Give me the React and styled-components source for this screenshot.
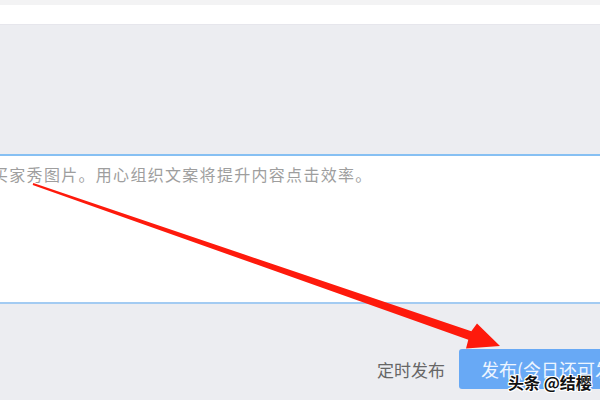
import styled, { createGlobalStyle } from "styled-components"

const GlobalStyle = createGlobalStyle`
  html, body {
    margin: 0;
    padding: 0;
    width: 600px;
    height: 400px;
    overflow: hidden;
    font-family: "Noto Sans CJK SC", "Noto Sans", sans-serif;
  }
`

export default function App() {
  return (
    <Page>
      <GlobalStyle />
      <TopStrip />
      <WhiteBar />
      <Panel>
        <Blank />
        <Editor>
          <Placeholder>买家秀图片。用心组织文案将提升内容点击效率。</Placeholder>
        </Editor>
        <Footer>
          <Schedule>定时发布</Schedule>
          <PublishButton>发布(今日还可发3次)</PublishButton>
        </Footer>
      </Panel>

      <Arrow width="600" height="400" viewBox="0 0 600 400">
        <polygon
          fill="#fe1a0c"
          points="33.3,183.1 471.3,331.2 477,323.5 500,346 466,348.5 468.3,339.8 32.7,184.9"
        />
      </Arrow>
      <Watermark>头条 @结樱</Watermark>
    </Page>
  )
}

const Page = styled.div`
  position: relative;
  width: 600px;
  height: 400px;
  display: flex;
  flex-direction: column;
  overflow: hidden;
  background: #ecedf1;
`
const TopStrip = styled.div`
  height: 5px;
  background: #f3f3f4;
`
const WhiteBar = styled.div`
  height: 19px;
  background: #fff;
  border-bottom: 1px solid #e6e6ec;
`
const Panel = styled.section`
  flex: 1;
  display: flex;
  flex-direction: column;
  background: #ecedf1;
`
const Blank = styled.div`
  height: 129px;
`
const Editor = styled.div`
  height: 139px;
  background: #fff;
  border-top: 2px solid #86c0f3;
  border-bottom: 2px solid #a3cbf2;
  padding-top: 7px;
  box-sizing: content-box;
`
const Placeholder = styled.p`
  margin: 0 0 0 -8px;
  font-size: 16px;
  line-height: 22px;
  letter-spacing: 1.3px;
  color: #9e9e9e;
  white-space: nowrap;
`
const Footer = styled.div`
  display: flex;
  align-items: center;
  gap: 14px;
  margin-top: 45px;
  padding-left: 377px;
`
const Schedule = styled.span`
  font-size: 17px;
  color: #666;
  white-space: nowrap;
  flex-shrink: 0;
`
const PublishButton = styled.button`
  flex-shrink: 0;
  height: 40px;
  padding: 0 22px;
  border: none;
  border-radius: 3px;
  background: #68a9f5;
  color: #edf5ff;
  font-family: inherit;
  font-size: 18px;
  white-space: nowrap;
`
const Arrow = styled.svg`
  position: absolute;
  left: 0;
  top: 0;
  pointer-events: none;
`
const Watermark = styled.span`
  position: absolute;
  left: 508px;
  top: 370px;
  font-size: 16px;
  font-weight: 700;
  color: #111;
  text-shadow: 1px 0 #fff, -1px 0 #fff, 0 1px #fff, 0 -1px #fff, 1px 1px #fff, -1px -1px #fff, 1px -1px #fff, -1px 1px #fff;
  white-space: nowrap;
`
